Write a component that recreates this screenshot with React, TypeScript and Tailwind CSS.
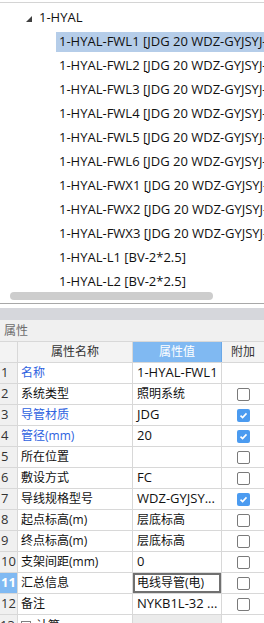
const font = { fontFamily: '"Open Sans", "Noto Sans CJK SC", sans-serif' };

const children = [
  '1-HYAL-FWL1 [JDG 20 WDZ-GYJSYJ-3*2.5]',
  '1-HYAL-FWL2 [JDG 20 WDZ-GYJSYJ-3*2.5]',
  '1-HYAL-FWL3 [JDG 20 WDZ-GYJSYJ-3*2.5]',
  '1-HYAL-FWL4 [JDG 20 WDZ-GYJSYJ-3*2.5]',
  '1-HYAL-FWL5 [JDG 20 WDZ-GYJSYJ-3*2.5]',
  '1-HYAL-FWL6 [JDG 20 WDZ-GYJSYJ-3*2.5]',
  '1-HYAL-FWX1 [JDG 20 WDZ-GYJSYJ-3*2.5]',
  '1-HYAL-FWX2 [JDG 20 WDZ-GYJSYJ-3*2.5]',
  '1-HYAL-FWX3 [JDG 20 WDZ-GYJSYJ-3*2.5]',
  '1-HYAL-L1 [BV-2*2.5]',
  '1-HYAL-L2 [BV-2*2.5]',
];

type Row = { name: string; value: string; latin?: boolean; blue?: boolean; check?: boolean | null };

const rows: Row[] = [
  { name: '名称', value: '1-HYAL-FWL1', latin: true, blue: true, check: null },
  { name: '系统类型', value: '照明系统', check: false },
  { name: '导管材质', value: 'JDG', latin: true, blue: true, check: true },
  { name: '管径(mm)', value: '20', latin: true, blue: true, check: true },
  { name: '所在位置', value: '', check: false },
  { name: '敷设方式', value: 'FC', latin: true, check: false },
  { name: '导线规格型号', value: 'WDZ-GYJSY...', latin: true, check: true },
  { name: '起点标高(m)', value: '层底标高', check: false },
  { name: '终点标高(m)', value: '层底标高', check: false },
  { name: '支架间距(mm)', value: '0', latin: true, check: false },
  { name: '汇总信息', value: '电线导管(电)', check: false },
  { name: '备注', value: 'NYKB1L-32 ...', latin: true, check: false },
];

function Check({ on }: { on: boolean }) {
  if (on) {
    return (
      <div className="w-[13px] h-[13px] rounded-[2px] bg-[#4b9bf0] flex items-center justify-center">
        <svg width="9" height="9" viewBox="0 0 9 9">
          <path d="M1.5 4.6 L3.6 6.6 L7.5 2.4" stroke="#fff" strokeWidth="1.6" fill="none" />
        </svg>
      </div>
    );
  }
  return <div className="w-[13px] h-[13px] rounded-[2px] border border-[#7a7a7a] bg-white" />;
}

export default function App() {
  return (
    <div className="w-[264px] h-[623px] overflow-hidden bg-white text-[12px] text-[#111]" style={font}>
      {/* 树 */}
      <div className="mt-[2px] border-t border-[#d4d4d4] text-[13px]">
        <div className="h-[289px] overflow-hidden pt-[3px]">
          <div className="h-[24px] flex items-center whitespace-nowrap">
            <svg width="6" height="6" viewBox="0 0 6 6" className="ml-[26px] mt-[1px]">
              <polygon points="6,0 6,6 0,6" fill="#404040" />
            </svg>
            <span className="ml-[7px]">1-HYAL</span>
          </div>
          {children.map((c, i) => (
            <div key={c} className="h-[24px] py-[2px] pl-[56px] whitespace-nowrap">
              <div className={`h-[20px] flex items-center pl-[3px] ${i === 0 ? 'bg-[#b5cde9]' : ''}`}>{c}</div>
            </div>
          ))}
        </div>
        <div className="h-[8px] pl-[10px]">
          <div className="w-[203px] h-[8px] rounded-full bg-[#cdcdcd]" />
        </div>
      </div>
      <div className="mt-[3px] border-t border-[#a8a8a8]" />
      <div className="mt-[4px] h-[12px] bg-[#d6d7dc]" />

      {/* 属性 */}
      <div className="h-[21px] bg-[#f0f0f0] flex items-center pl-[4px] text-[#6d6d6d]">属性</div>
      <div className="border-t border-[#d8d8d8]">
        <div className="grid grid-cols-[18px_115px_89px_42px] h-[21px] border-b border-[#d8d8d8] bg-[#f3f3f3]">
          <div className="border-r border-[#d8d8d8]" />
          <div className="border-r border-[#d8d8d8] flex items-center justify-center text-[#333]">属性名称</div>
          <div className="border-r border-[#6aa8e8] bg-[#80b9f2] flex items-center justify-center text-white">属性值</div>
          <div className="flex items-center justify-center text-[#333]">附加</div>
        </div>
        {rows.map((r, i) => (
          <div key={i} className="grid grid-cols-[18px_115px_89px_42px] h-[21px] border-b border-[#d8d8d8]">
            <div
              className={`border-r border-[#d8d8d8] flex items-center pl-[1px] text-[13px] ${
                i === 10 ? 'bg-[#80b9f2] text-white font-bold' : 'bg-[#f0f0f0] text-[#333]'
              }`}
            >
              {i + 1}
            </div>
            <div className={`border-r border-[#d8d8d8] flex items-center pl-[3px] whitespace-nowrap ${r.blue ? 'text-[#2e62e0]' : ''}`}>
              {r.name}
            </div>
            <div
              className={`border-r border-[#d8d8d8] flex items-center pl-[4px] whitespace-nowrap overflow-hidden ${
                r.latin ? 'text-[13px]' : ''
              } ${i === 10 ? 'ring-2 ring-inset ring-[#707070]' : ''}`}
            >
              {r.value}
            </div>
            <div className="flex items-center justify-center">{r.check !== null && r.check !== undefined && <Check on={r.check} />}</div>
          </div>
        ))}
        <div className="grid grid-cols-[18px_115px_89px_42px] h-[21px]">
          <div className="border-r border-[#d8d8d8] bg-[#f0f0f0] flex items-center text-[13px] text-[#333]">13</div>
          <div className="border-r border-[#d8d8d8] flex items-center pl-[3px] gap-[5px]">
            <div className="w-[10px] h-[10px] border border-[#808080]" />
            <span>计算</span>
          </div>
          <div className="border-r border-[#d8d8d8] bg-[#ebebeb]" />
          <div />
        </div>
      </div>
    </div>
  );
}
